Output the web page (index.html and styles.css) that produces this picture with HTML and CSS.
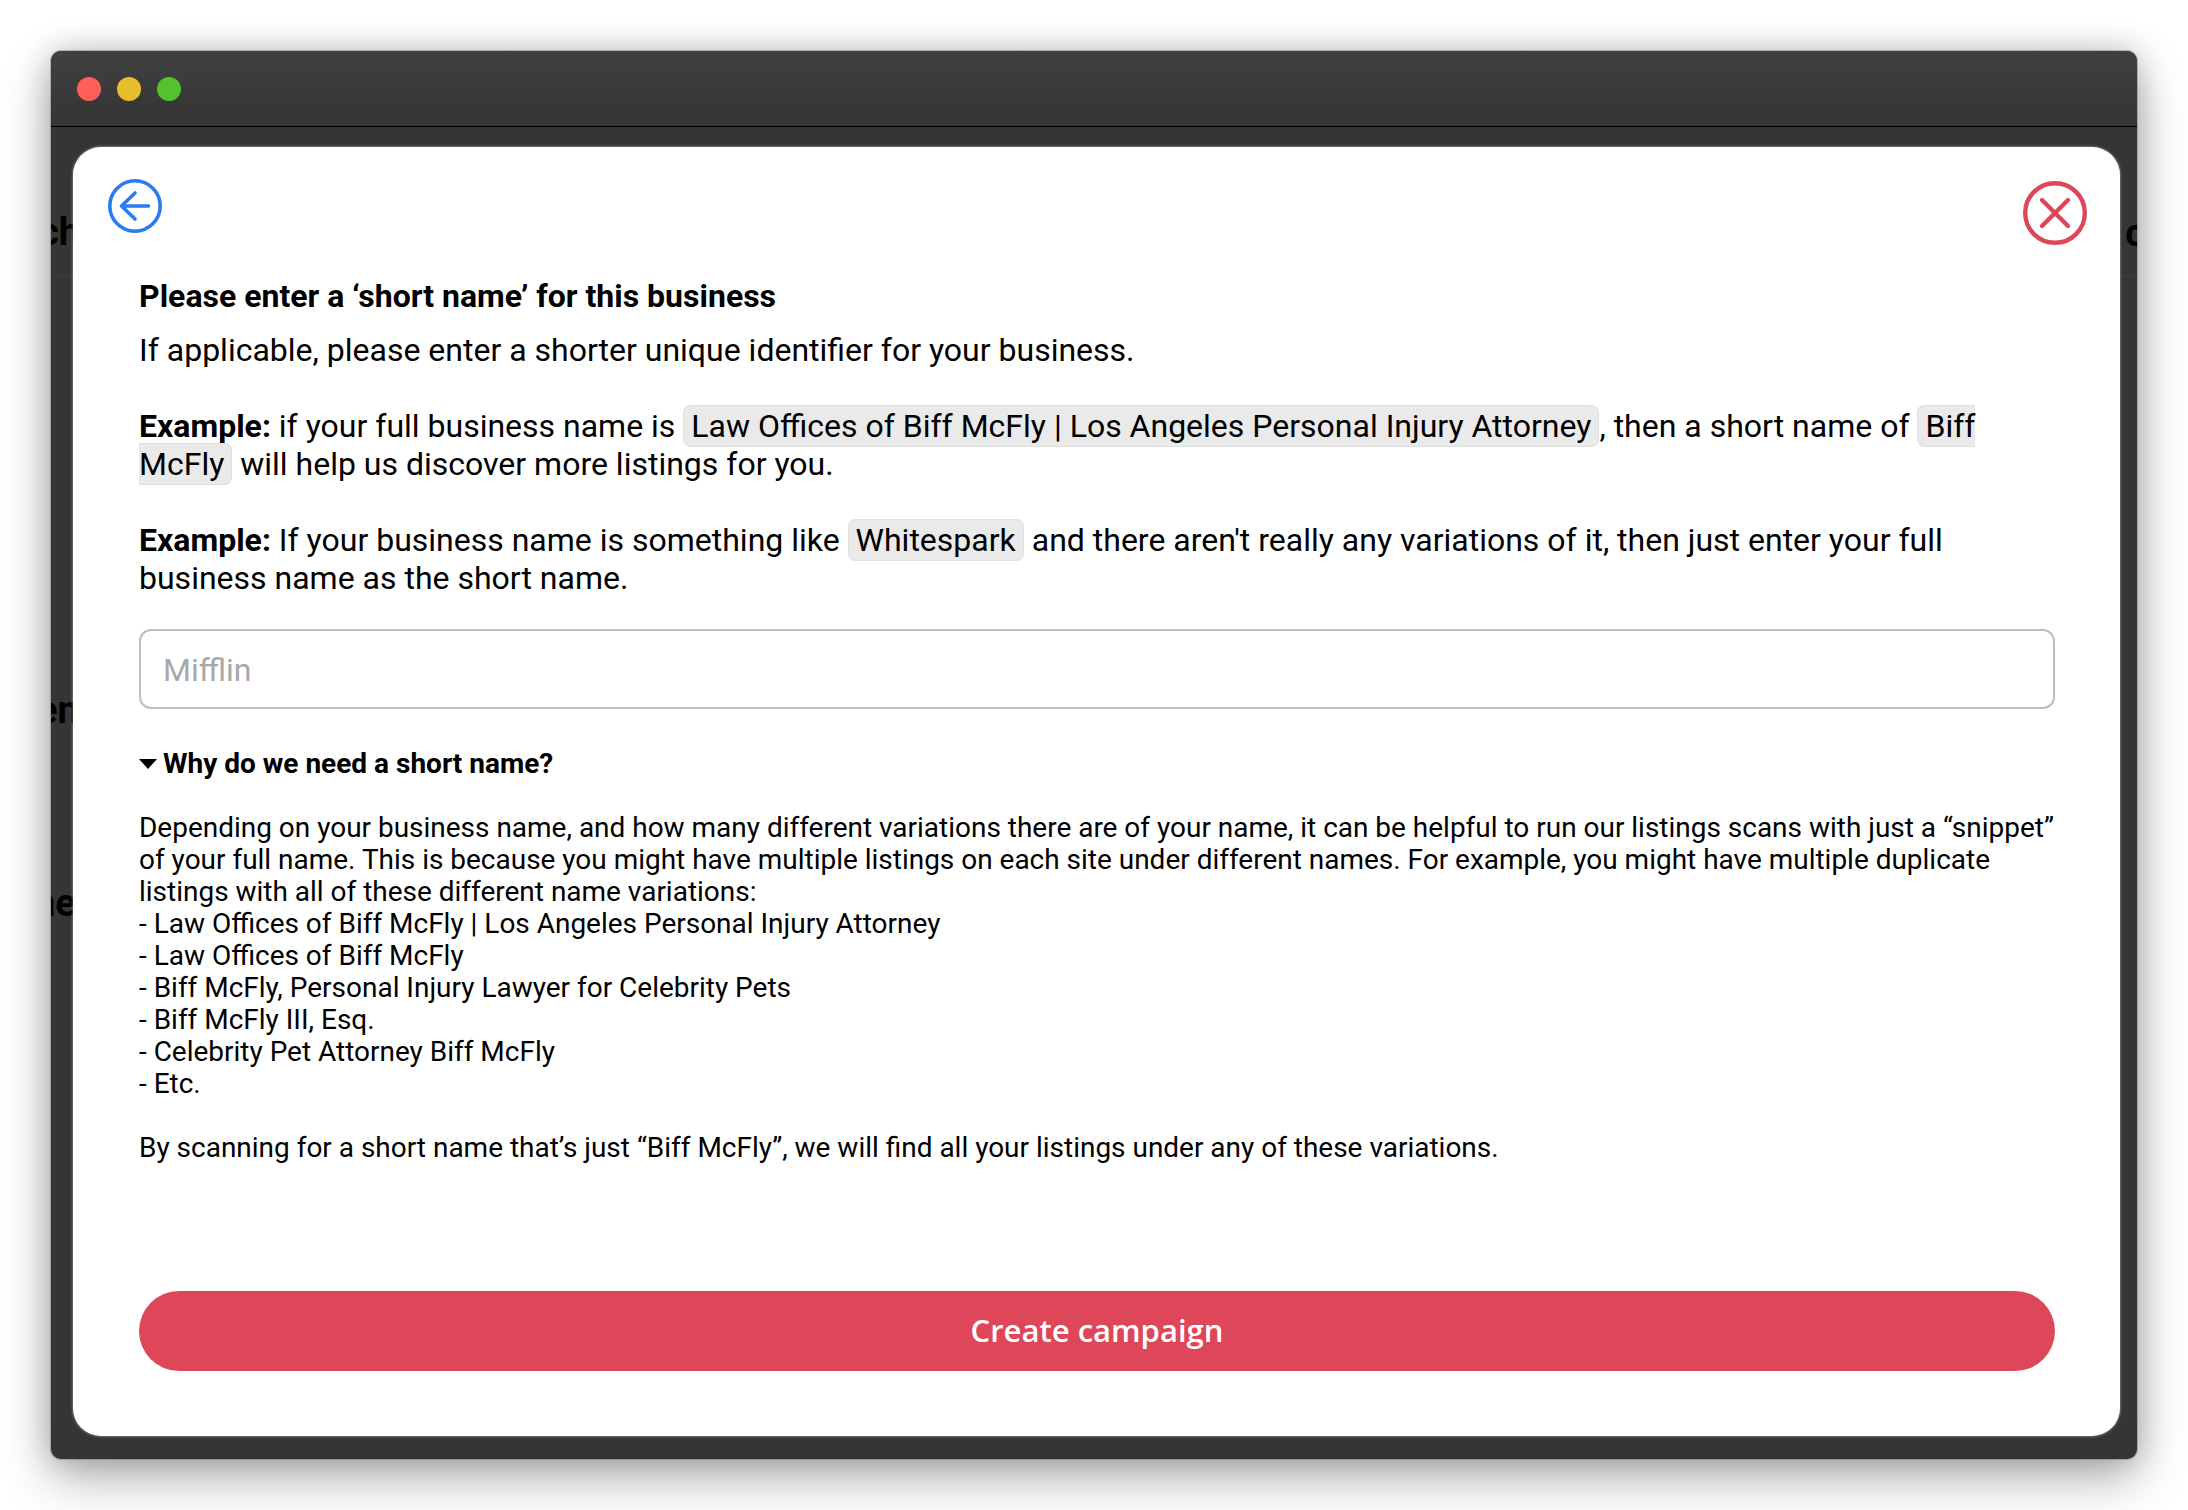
FILE: index.html
```html
<!DOCTYPE html>
<html lang="en">
<head>
<meta charset="utf-8">
<title>Short name</title>
<link rel="stylesheet" href="styles.css">
</head>
<body>
<div class="window">
  <header class="titlebar">
    <span class="light red"></span>
    <span class="light yellow"></span>
    <span class="light green"></span>
  </header>
  <div class="stage">
    <span class="behind b1">ch</span>
    <span class="behind b2">en</span>
    <span class="behind b3">ne</span>
    <span class="behind b4">c</span>
    <span class="stage-line"></span>
    <main class="modal">
      <div class="icons">
        <svg class="back" width="56" height="56" viewBox="0 0 56 56" fill="none" stroke="#2b7bf3" stroke-width="3.6" stroke-linecap="round" stroke-linejoin="round"><circle cx="28" cy="28" r="25.2"/><path d="M41.5 28H14.5M28 15L14.5 28L28 41"/></svg>
        <svg class="close" width="66" height="66" viewBox="0 0 66 66" fill="none" stroke="#dd4759" stroke-width="4.4" stroke-linecap="round"><circle cx="33" cy="33" r="29.8"/><path d="M20 20L46 46M46 20L20 46"/></svg>
      </div>
      <h1 class="title">Please enter a ‘short name’ for this business</h1>
      <p class="lead">If applicable, please enter a shorter unique identifier for your business.</p>
      <p class="example"><strong>Example:</strong> if your full business name is <span class="chip">Law Offices of Biff McFly | Los Angeles Personal Injury Attorney</span>, then a short name of <span class="chip">Biff McFly</span> will help us discover more listings for you.</p>
      <p class="example"><strong>Example:</strong> If your business name is something like <span class="chip">Whitespark</span> and there aren't really any variations of it, then just enter your full business name as the short name.</p>
      <input class="field" type="text" placeholder="Mifflin">
      <h2 class="why"><span class="caret"></span>Why do we need a short name?</h2>
      <p class="explain">Depending on your business name, and how many different variations there are of your name, it can be helpful to run our listings scans with just a “snippet” of your full name. This is because you might have multiple listings on each site under different names. For example, you might have multiple duplicate listings with all of these different name variations:<br>- Law Offices of Biff McFly | Los Angeles Personal Injury Attorney<br>- Law Offices of Biff McFly<br>- Biff McFly, Personal Injury Lawyer for Celebrity Pets<br>- Biff McFly III, Esq.<br>- Celebrity Pet Attorney Biff McFly<br>- Etc.</p>
      <p class="explain">By scanning for a short name that’s just “Biff McFly”, we will find all your listings under any of these variations.</p>
      <button class="cta" type="button">Create campaign</button>
    </main>
  </div>
</div>
</body>
</html>
```
FILE: styles.css
```css
* { box-sizing: border-box; }
html, body { margin: 0; height: 100%; }
body {
  background: #fff;
  font-family: Roboto, "Liberation Sans", sans-serif;
  color: #000;
  padding: 51px;
  overflow: hidden;
}
.window {
  width: 2086px;
  height: 1408px;
  border-radius: 10px;
  background: #353535;
  box-shadow: 0 0 0 1px rgba(120,120,120,.45), 0 18px 50px rgba(0,0,0,.32), 0 0 30px rgba(0,0,0,.18);
  display: flex;
  flex-direction: column;
  overflow: hidden;
}
.titlebar {
  height: 76px;
  flex: none;
  display: flex;
  align-items: center;
  gap: 16px;
  padding: 1px 0 0 26px;
  background: linear-gradient(#404040, #353535);
  border-bottom: 1px solid #000;
}
.light { width: 24px; height: 24px; border-radius: 50%; }
.red { background: #ff5f57; }
.yellow { background: #e6bd2b; }
.green { background: #53c22d; }
.stage {
  position: relative;
  flex: 1;
  padding: 20px 17px 23px 22px;
  display: flex;
  min-height: 0;
}
.behind {
  position: absolute;
  font-weight: 700;
  font-size: 38px;
  line-height: 44px;
  color: #000;
}
.b1 { left: -12px; top: 83px; }
.b2 { left: -14px; top: 561px; }
.b3 { left: -17px; top: 754px; }
.b4 { right: -8px; top: 84px; }
.stage-line {
  position: absolute;
  left: 0;
  right: 0;
  top: 148px;
  height: 1px;
  background: #3d3d3d;
}
.modal {
  position: relative;
  flex: 1;
  background: #fff;
  border-radius: 28px;
  box-shadow: 0 0 3px rgba(255,255,255,.6);
  padding: 130px 65px 65px 66px;
  display: flex;
  flex-direction: column;
}
.icons { display: contents; }
.back { position: absolute; left: 34px; top: 31px; }
.close { position: absolute; right: 32px; top: 33px; }
.title { margin: 0 0 16px; font-size: 32px; line-height: 38px; font-weight: 700; }
.lead { margin: 0 0 38px; font-size: 32px; line-height: 38px; }
.example { margin: 0 0 38px; font-size: 32px; line-height: 38px; }
.example strong { font-weight: 700; }
.chip {
  background: #eaeaea;
  border: 1px solid #dfdfdf;
  border-radius: 8px;
  padding: 1px 7px;
}
.field {
  width: 100%;
  height: 80px;
  flex: none;
  border: 2px solid #bdbdbd;
  border-radius: 12px;
  padding: 2px 22px 0;
  font: 32px Roboto, sans-serif;
  color: #000;
  margin: -6px 0 39px;
  outline: none;
}
.field::placeholder { color: #a8a8a8; opacity: 1; }
.why { margin: 0 0 32px; font-size: 28px; line-height: 32px; font-weight: 700; display: flex; align-items: center; gap: 6px; }
.caret { width: 0; height: 0; border-left: 9px solid transparent; border-right: 9px solid transparent; border-top: 10px solid #000; }
.explain { margin: 0 -4px 32px 0; font-size: 27.97px; line-height: 32px; }
.cta {
  margin-top: auto;
  height: 80px;
  flex: none;
  width: 100%;
  border: 0;
  border-radius: 40px;
  background: #dd4759;
  color: #fff;
  padding: 0 0 3px;
  font: 600 31px "Open Sans", sans-serif;
}
```
